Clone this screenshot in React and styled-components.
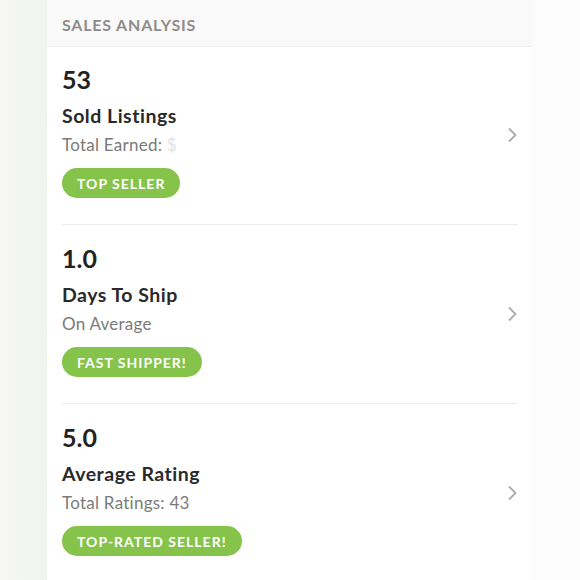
import React from "react";
import styled, { createGlobalStyle } from "styled-components";

const Global = createGlobalStyle`
  html, body { margin: 0; padding: 0; background: #fdfcfc; }
  body { font-family: Lato, "Open Sans", sans-serif; }
`;

const Page = styled.div`
  display: grid;
  grid-template-columns: 47px 485px 1fr;
  min-height: 580px;
  width: 580px;
  overflow: hidden;
`;

const Gutter = styled.div`
  background: linear-gradient(90deg, #f6f7f5 0%, #f1f3ef 100%);
`;

const Side = styled.div`
  background: #fdfcfc;
`;

const Panel = styled.div`
  background: #fff;
  display: flex;
  flex-direction: column;
`;

const Header = styled.div`
  height: 47px;
  box-sizing: border-box;
  background: #faf9f9;
  border-bottom: 1px solid #f2f0ef;
  display: flex;
  align-items: center;
  padding-left: 15px;
  padding-top: 2px;
  font-size: 16px;
  font-weight: 700;
  letter-spacing: 0.8px;
  color: #8f8c8b;
  text-transform: uppercase;
`;

const List = styled.div`
  padding: 0 14px 0 15px;
`;

const Item = styled.div`
  display: flex;
  align-items: center;
  padding: ${p => (p.$first ? "17px" : "18px")} 0 26px;
  border-bottom: ${p => (p.$last ? "none" : "1px solid #ebebeb")};
`;

const Body = styled.div`
  flex: 1;
  display: flex;
  flex-direction: column;
  align-items: flex-start;
`;

const Value = styled.div`
  font-size: 25px;
  line-height: 30px;
  font-weight: 700;
  color: #222;
`;

const Title = styled.div`
  margin-top: 10px;
  font-size: 19.5px;
  line-height: 24px;
  font-weight: 700;
  color: #2a2a2a;
  letter-spacing: 0.5px;
`;

const Sub = styled.div`
  margin-top: 6px;
  font-size: 17px;
  line-height: 22px;
  color: #7a7a7a;
  letter-spacing: 0.25px;
`;

const Faded = styled.span`
  color: #e2e2e2;
`;

const Badge = styled.div`
  margin-top: 12px;
  height: 30px;
  padding: 0 15px;
  border-radius: 15px;
  background: #86c34a;
  color: #fff;
  font-size: 14px;
  font-weight: 700;
  letter-spacing: 1px;
  display: flex;
  align-items: center;
`;

const Chevron = styled.svg`
  width: 10px;
  height: 16px;
  flex: none;
  margin: 8px 1px 0 0;
`;

const Arrow = () => (
  <Chevron viewBox="0 0 10 16">
    <path d="M2 1.5 L8.5 8 L2 14.5" fill="none" stroke="#ababab" strokeWidth="1.8" />
  </Chevron>
);

const items = [
  { value: "53", title: "Sold Listings", sub: <>Total Earned: <Faded>$</Faded></>, badge: "TOP SELLER" },
  { value: "1.0", title: "Days To Ship", sub: "On Average", badge: "FAST SHIPPER!" },
  { value: "5.0", title: "Average Rating", sub: "Total Ratings: 43", badge: "TOP-RATED SELLER!" },
];

export default function App() {
  return (
    <>
      <Global />
      <Page>
        <Gutter />
        <Panel>
          <Header>Sales Analysis</Header>
          <List>
            {items.map((it, i) => (
              <Item key={i} $first={i === 0} $last={i === items.length - 1}>
                <Body>
                  <Value>{it.value}</Value>
                  <Title>{it.title}</Title>
                  <Sub>{it.sub}</Sub>
                  <Badge>{it.badge}</Badge>
                </Body>
                <Arrow />
              </Item>
            ))}
          </List>
        </Panel>
        <Side />
      </Page>
    </>
  );
}
